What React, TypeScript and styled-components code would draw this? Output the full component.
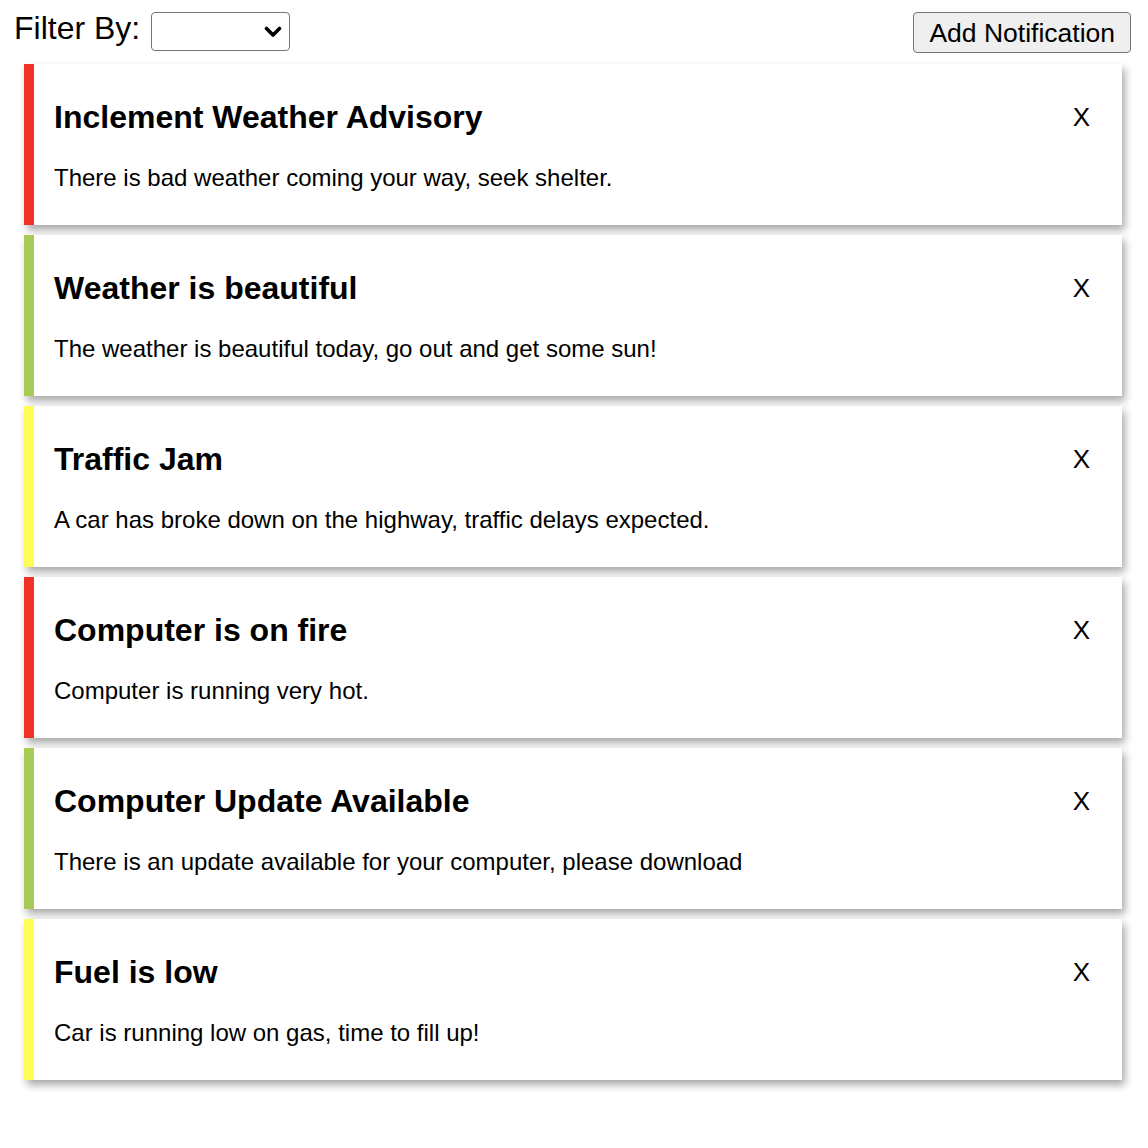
import React from "react";
import styled, { createGlobalStyle } from "styled-components";

const GlobalStyle = createGlobalStyle`
  body {
    margin: 8px;
    background: #ffffff;
    font-family: "Liberation Sans", Arial, sans-serif;
    color: #000000;
  }
`;

type Level = "danger" | "ok" | "warn";

const levelColor: Record<Level, string> = {
  danger: "#ee3327",
  ok: "#a6cc55",
  warn: "#fdfd55",
};

const Header = styled.header`
  display: flex;
  justify-content: space-between;
  align-items: flex-start;
  padding: 0 9px 0 6px;
`;

const FilterGroup = styled.div`
  display: flex;
  align-items: flex-start;
`;

const FilterLabel = styled.label`
  font-size: 32px;
  line-height: 37px;
  margin-top: 2px;
`;

const SelectWrap = styled.div`
  position: relative;
  margin: 4px 0 0 11px;
  width: 139px;
  height: 39px;
`;

const FilterSelect = styled.select`
  appearance: none;
  -webkit-appearance: none;
  box-sizing: border-box;
  width: 100%;
  height: 100%;
  padding: 0 36px 0 8px;
  font-family: "Liberation Sans", Arial, sans-serif;
  font-size: 20px;
  border: 1.5px solid #767676;
  border-radius: 4px;
  background: #ffffff;
  color: #000000;
`;

const Chevron = styled.svg`
  position: absolute;
  right: 8px;
  top: 14px;
  width: 18px;
  height: 12px;
  pointer-events: none;
`;

const AddButton = styled.button`
  margin-top: 4px;
  height: 41px;
  padding: 0 15px;
  font-family: "Liberation Sans", Arial, sans-serif;
  font-size: 26.5px;
  line-height: 30px;
  color: #000000;
  background: #efefef;
  border: 1px solid #767676;
  border-radius: 4px;
`;

const List = styled.ul`
  list-style: none;
  margin: 11px 18px 0 16px;
  padding: 0 0 16px;
  display: flex;
  flex-direction: column;
  gap: 10px;
`;

const Card = styled.li<{ $level: Level }>`
  box-sizing: border-box;
  height: 161px;
  background: #ffffff;
  border-left: 10px solid ${(p) => levelColor[p.$level]};
  box-shadow: 3px 5px 8px rgba(0, 0, 0, 0.34);
  padding: 35px 32px 0 20px;
`;

const CardHead = styled.div`
  display: flex;
  justify-content: space-between;
  align-items: flex-start;
`;

const Title = styled.h1`
  margin: 0;
  font-size: 32px;
  line-height: 37px;
  font-weight: bold;
`;

const Close = styled.button`
  margin-top: 3px;
  padding: 0;
  border: none;
  background: none;
  font-family: "Liberation Sans", Arial, sans-serif;
  font-size: 26px;
  line-height: 30px;
  color: #000000;
  cursor: pointer;
`;

const Message = styled.p`
  margin: 28px 0 0;
  font-size: 24px;
  line-height: 28px;
`;

const notifications: { title: string; body: string; level: Level }[] = [
  { title: "Inclement Weather Advisory", body: "There is bad weather coming your way, seek shelter.", level: "danger" },
  { title: "Weather is beautiful", body: "The weather is beautiful today, go out and get some sun!", level: "ok" },
  { title: "Traffic Jam", body: "A car has broke down on the highway, traffic delays expected.", level: "warn" },
  { title: "Computer is on fire", body: "Computer is running very hot.", level: "danger" },
  { title: "Computer Update Available", body: "There is an update available for your computer, please download", level: "ok" },
  { title: "Fuel is low", body: "Car is running low on gas, time to fill up!", level: "warn" },
];

export default function App() {
  return (
    <>
      <GlobalStyle />
      <Header>
        <FilterGroup>
          <FilterLabel htmlFor="filter">Filter By:</FilterLabel>
          <SelectWrap>
            <FilterSelect id="filter" defaultValue="">
              <option value=""></option>
              <option value="danger">Danger</option>
              <option value="ok">Info</option>
              <option value="warn">Warning</option>
            </FilterSelect>
            <Chevron viewBox="0 0 18 12" aria-hidden="true">
              <path d="M2.5 2.5 L9 9 L15.5 2.5" fill="none" stroke="#000" strokeWidth="3.6" strokeLinecap="round" strokeLinejoin="round" />
            </Chevron>
          </SelectWrap>
        </FilterGroup>
        <AddButton>Add Notification</AddButton>
      </Header>
      <List>
        {notifications.map((n) => (
          <Card key={n.title} $level={n.level}>
            <CardHead>
              <Title>{n.title}</Title>
              <Close>X</Close>
            </CardHead>
            <Message>{n.body}</Message>
          </Card>
        ))}
      </List>
    </>
  );
}
